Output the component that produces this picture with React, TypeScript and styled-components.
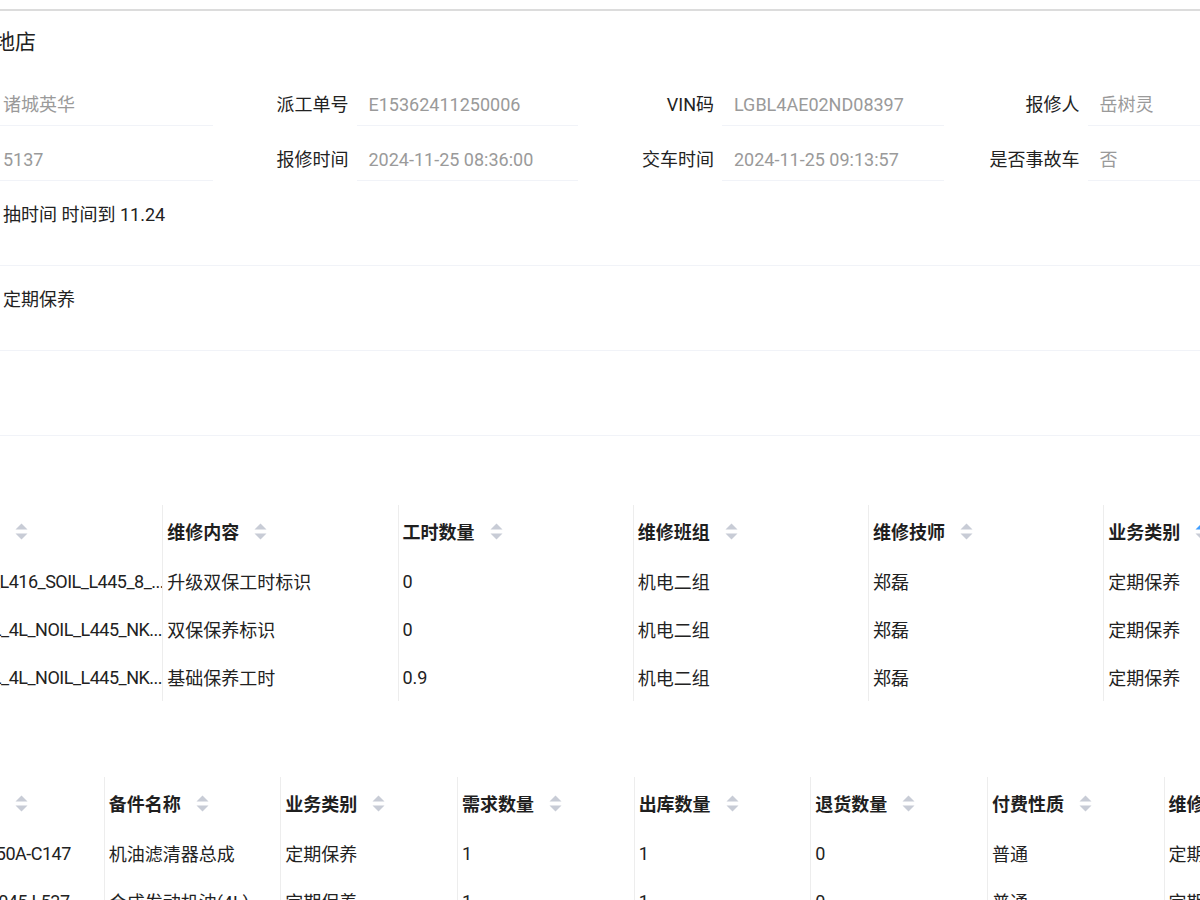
import React from "react";
import styled, { createGlobalStyle } from "styled-components";

const GlobalStyle = createGlobalStyle`
  html, body {
    margin: 0;
    padding: 0;
    overflow: hidden;
    background: #ffffff;
  }
  body {
    font-family: Roboto, "Noto Sans CJK SC", sans-serif;
    color: #333333;
  }
`;

const Page = styled.div`
  margin-left: -153px;
  padding-top: 9px;
  width: 1740px;
`;

const TopRule = styled.div`
  height: 2px;
  background: #dcdcdc;
`;

const Title = styled.h1`
  margin: 16px 0 0;
  font-size: 21px;
  line-height: 30px;
  font-weight: 400;
  color: #222222;
  white-space: nowrap;
`;

const DetailGrid = styled.div`
  margin-top: 14px;
  width: 1462px;
  display: grid;
  grid-template-columns: repeat(4, 1fr);
`;

const Item = styled.div<{ $full?: boolean; $tall?: boolean }>`
  display: flex;
  grid-column: ${(p) => (p.$full ? "1 / -1" : "auto")};
  height: ${(p) => (p.$tall ? "85px" : "55px")};
  font-size: 18px;
  line-height: 24px;
`;

const Label = styled.div`
  flex: 0 0 144px;
  box-sizing: border-box;
  padding: 22px 8px 0 0;
  text-align: right;
  color: #222222;
  white-space: nowrap;
`;

const Value = styled.div<{ $dark?: boolean }>`
  flex: 1;
  min-width: 0;
  box-sizing: border-box;
  padding: 22px 12px 0;
  border-bottom: 1px solid #f1f3f8;
  color: ${(p) => (p.$dark ? "#222222" : "#9a9a9a")};
  white-space: nowrap;
`;

const TableWrap = styled.div<{ $gap: number }>`
  margin-top: ${(p) => p.$gap}px;
`;

const Table = styled.table`
  border-collapse: collapse;
  table-layout: fixed;
  font-size: 18px;
  color: #222222;
`;

const HeadCell = styled.th<{ $h: number; $flush?: boolean }>`
  height: ${(p) => p.$h}px;
  padding: 0 0 0 ${(p) => (p.$flush ? 0 : 4)}px;
  text-align: left;
  font-weight: 700;
  color: #1f1f1f;
  border-left: 1px solid #ededed;
  white-space: nowrap;
  overflow: hidden;
`;

const HeadInner = styled.span`
  display: inline-flex;
  align-items: center;
`;

const Cell = styled.td<{ $code?: boolean }>`
  height: 48px;
  padding: 0 0 0 4px;
  border-left: 1px solid #ededed;
  white-space: nowrap;
  overflow: hidden;
  font-weight: 400;
  letter-spacing: ${(p) => (p.$code ? "-0.5px" : "normal")};
`;

const SortWrap = styled.svg`
  margin-left: 15px;
  flex: none;
`;

const SortIcon: React.FC<{ active?: "asc" | "desc" }> = ({ active }) => (
  <SortWrap width="13" height="17" viewBox="0 0 13 17">
    <polygon points="0.5,6.5 6.5,0.5 12.5,6.5" fill={active === "asc" ? "#409eff" : "#c8ccd6"} />
    <polygon points="0.5,10.5 6.5,16.5 12.5,10.5" fill={active === "desc" ? "#409eff" : "#c8ccd6"} />
  </SortWrap>
);

type Col = { title: string; width: number; sort?: "asc" | "desc" };

const DataTable: React.FC<{ cols: Col[]; rows: string[][]; headH: number }> = ({ cols, rows, headH }) => (
  <Table style={{ width: cols.reduce((s, c) => s + c.width, 0) }}>
    <colgroup>
      {cols.map((c, i) => (
        <col key={i} style={{ width: c.width }} />
      ))}
    </colgroup>
    <thead>
      <tr>
        {cols.map((c, i) => (
          <HeadCell key={i} $h={headH} $flush={i === 1}>
            <HeadInner>
              {c.title}
              {i > 0 && <SortIcon active={c.sort} />}
            </HeadInner>
          </HeadCell>
        ))}
      </tr>
    </thead>
    <tbody>
      {rows.map((r, ri) => (
        <tr key={ri}>
          {r.map((v, ci) => (
            <Cell key={ci} $code={ci === 1}>
              {v}
            </Cell>
          ))}
        </tr>
      ))}
    </tbody>
  </Table>
);

const w1 = 235.25;
const laborCols: Col[] = [
  { title: "序号", width: 80 },
  { title: "工时代码", width: w1 },
  { title: "维修内容", width: w1 },
  { title: "工时数量", width: w1 },
  { title: "维修班组", width: w1 },
  { title: "维修技师", width: w1 },
  { title: "业务类别", width: w1, sort: "asc" },
];

const laborRows = [
  ["1", "WHBYG_L416_SOIL_L445_8_...", "升级双保工时标识", "0", "机电二组", "郑磊", "定期保养"],
  ["2", "WHBYGL_4L_NOIL_L445_NK...", "双保保养标识", "0", "机电二组", "郑磊", "定期保养"],
  ["3", "WHBYGL_4L_NOIL_L445_NK...", "基础保养工时", "0.9", "机电二组", "郑磊", "定期保养"],
];

const w2 = 176.67;
const partCols: Col[] = [
  { title: "序号", width: 80 },
  { title: "备件编码", width: w2 },
  { title: "备件名称", width: w2 },
  { title: "业务类别", width: w2 },
  { title: "需求数量", width: w2 },
  { title: "出库数量", width: w2 },
  { title: "退货数量", width: w2 },
  { title: "付费性质", width: w2 },
  { title: "维修类别", width: w2 },
];

const partRows = [
  ["1", "AYE005-50A-C147", "机油滤清器总成", "定期保养", "1", "1", "0", "普通", "定期保养"],
  ["2", "KEH900-045-L537", "合成发动机油(4L)", "定期保养", "1", "1", "0", "普通", "定期保养"],
];

export default function App() {
  return (
    <>
      <GlobalStyle />
      <Page>
        <TopRule />
        <Title>诸城英华汽车基地店</Title>
        <DetailGrid>
          <Item>
            <Label>服务站</Label>
            <Value>诸城英华</Value>
          </Item>
          <Item>
            <Label>派工单号</Label>
            <Value>E15362411250006</Value>
          </Item>
          <Item>
            <Label>VIN码</Label>
            <Value>LGBL4AE02ND08397</Value>
          </Item>
          <Item>
            <Label>报修人</Label>
            <Value>岳树灵</Value>
          </Item>
          <Item>
            <Label>行驶里程</Label>
            <Value>5137</Value>
          </Item>
          <Item>
            <Label>报修时间</Label>
            <Value>2024-11-25 08:36:00</Value>
          </Item>
          <Item>
            <Label>交车时间</Label>
            <Value>2024-11-25 09:13:57</Value>
          </Item>
          <Item>
            <Label>是否事故车</Label>
            <Value>否</Value>
          </Item>
          <Item $full $tall>
            <Label>客户描述</Label>
            <Value $dark>抽时间 时间到 11.24</Value>
          </Item>
          <Item $full $tall>
            <Label>维修类别</Label>
            <Value $dark>定期保养</Value>
          </Item>
          <Item $full $tall>
            <Label>备注</Label>
            <Value $dark></Value>
          </Item>
        </DetailGrid>
        <TableWrap $gap={69}>
          <DataTable cols={laborCols} rows={laborRows} headH={52} />
        </TableWrap>
        <TableWrap $gap={76}>
          <DataTable cols={partCols} rows={partRows} headH={52} />
        </TableWrap>
      </Page>
    </>
  );
}
